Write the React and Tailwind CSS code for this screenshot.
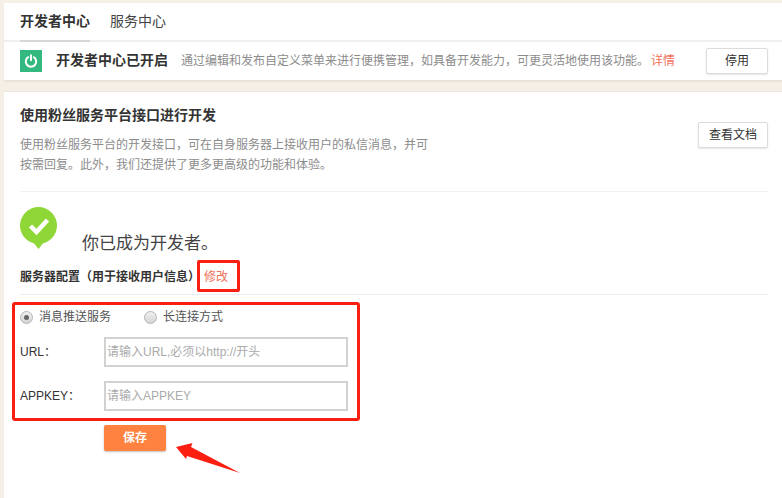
import React from "react";

const font = { fontFamily: '"Liberation Sans","Noto Sans CJK SC",sans-serif' };

function Radio({ checked }) {
  return (
    <span className="w-[13px] h-[13px] rounded-full border border-[#b5b5b5] bg-gradient-to-b from-[#f0f0f0] to-[#d4d4d4] flex items-center justify-center shrink-0">
      {checked && <span className="w-[5px] h-[5px] rounded-full bg-[#666]" />}
    </span>
  );
}

function Field({ label, placeholder }) {
  return (
    <div className="flex items-center h-[30px]">
      <label className="w-[84px] text-[12px] text-[#333]">{label}</label>
      <input
        readOnly
        placeholder={placeholder}
        className="w-[244px] h-[30px] border-2 border-[#d2d2d2] px-[1px] text-[12px] bg-white outline-none placeholder:text-[#aaa]"
      />
    </div>
  );
}

export default function App() {
  return (
    <div style={font} className="relative w-[782px] h-[498px] overflow-hidden bg-[#f6efe6] pl-[4px] pt-[3px]">
      <div className="h-[78px] bg-white border-b border-[#e4e0da] shadow-[0_1px_2px_rgba(0,0,0,0.05)]">
        <div className="h-[39px] pl-[16px] flex gap-[20px] border-b-2 border-[#f0f0f0]">
          <div className="w-[70px] h-[39px] border-b-2 border-[#d6d6d6] text-[14px] leading-[36px] font-bold text-[#333]">开发者中心</div>
          <div className="text-[14px] leading-[36px] text-[#444]">服务中心</div>
        </div>
        <div className="flex items-center pl-[16px] pr-[14px] h-[37px]">
          <div className="w-[22px] h-[22px] bg-[#33b97f] flex items-center justify-center shrink-0">
            <svg width="14" height="14" viewBox="0 0 14 14" fill="none" stroke="#fff" strokeWidth="2" strokeLinecap="round">
              <path d="M4.2 3.2a5.2 5.2 0 1 0 5.6 0" />
              <path d="M7 1.2v5" />
            </svg>
          </div>
          <div className="ml-[14px] text-[14px] font-bold text-[#333] whitespace-nowrap">开发者中心已开启</div>
          <div className="ml-[13px] text-[12px] text-[#8c8c8c] whitespace-nowrap">
            通过编辑和发布自定义菜单来进行便携管理，如具备开发能力，可更灵活地使用该功能。
            <span className="ml-[2px] text-[#f0705a]">详情</span>
          </div>
          <button className="ml-auto w-[62px] h-[26px] bg-white border border-[#dcdcdc] rounded-[2px] shadow-[0_1px_2px_rgba(0,0,0,0.1)] text-[12px] text-[#333]">停用</button>
        </div>
      </div>

      <div className="mt-[10px] h-[407px] bg-white border-t border-[#ece6dd] pt-[13px] pl-[16px] pr-[14px]">
        <div className="flex justify-between h-[87px] border-b border-[#f0f0f0]">
          <div>
            <div className="text-[14px] leading-[20px] font-bold text-[#333]">使用粉丝服务平台接口进行开发</div>
            <p className="mt-[10px] w-[412px] text-[12px] leading-[20px] text-[#8c8c8c]">
              使用粉丝服务平台的开发接口，可在自身服务器上接收用户的私信消息，并可按需回复。此外，我们还提供了更多更高级的功能和体验。
            </p>
          </div>
          <button className="mt-[17px] w-[70px] h-[26px] bg-white border border-[#dcdcdc] rounded-[2px] shadow-[0_1px_2px_rgba(0,0,0,0.1)] text-[12px] text-[#333]">查看文档</button>
        </div>

        <div className="mt-[15px] flex h-[46px]">
          <svg width="37" height="42" viewBox="0 0 37 42" className="shrink-0">
            <circle cx="18.5" cy="18.5" r="18.5" fill="#8fd637" />
            <path d="M13 35h11l-5.5 7z" fill="#8fd637" />
            <path d="M10.5 19l6 6L27.5 13" fill="none" stroke="#fff" strokeWidth="4.5" />
          </svg>
          <div className="ml-[25px] mt-[25px] text-[17px] leading-[24px] text-[#444] whitespace-nowrap">你已成为开发者。</div>
        </div>

        <div className="flex items-center h-[35px] mt-[7px] border-b border-[#ededed]">
          <span className="text-[12px] font-bold text-[#333] whitespace-nowrap">服务器配置（用于接收用户信息）</span>
          <span className="ml-[4px] text-[12px] text-[#f0705a]">修改</span>
        </div>

        <div className="mt-[13px] flex items-center h-[18px] text-[12px] text-[#555]">
          <Radio checked />
          <span className="ml-[6px]">消息推送服务</span>
          <span className="ml-[33px]"><Radio /></span>
          <span className="ml-[6px]">长连接方式</span>
        </div>
        <div className="mt-[11px]"><Field label="URL：" placeholder="请输入URL,必须以http://开头" /></div>
        <div className="mt-[14px]"><Field label="APPKEY：" placeholder="请输入APPKEY" /></div>
        <button className="mt-[14px] ml-[84px] block w-[62px] h-[26px] bg-[#ff8240] rounded-[2px] shadow-[0_1px_2px_rgba(0,0,0,0.25)] text-[12px] font-bold text-white">保存</button>
      </div>

      <div className="absolute left-[197px] top-[260px] w-[43px] h-[32px] border-[3px] border-[#fb1f12] rounded-[2px]" />
      <div className="absolute left-[12px] top-[302px] w-[348px] h-[119px] border-[3px] border-[#fb1f12] rounded-[3px]" />
      <svg className="absolute left-[170px] top-[438px]" width="76" height="40" viewBox="0 0 76 40">
        <path d="M6 9L22.5 5L21 9L70 35L17 18L16 21Z" fill="#fb1f12" />
      </svg>
    </div>
  );
}
